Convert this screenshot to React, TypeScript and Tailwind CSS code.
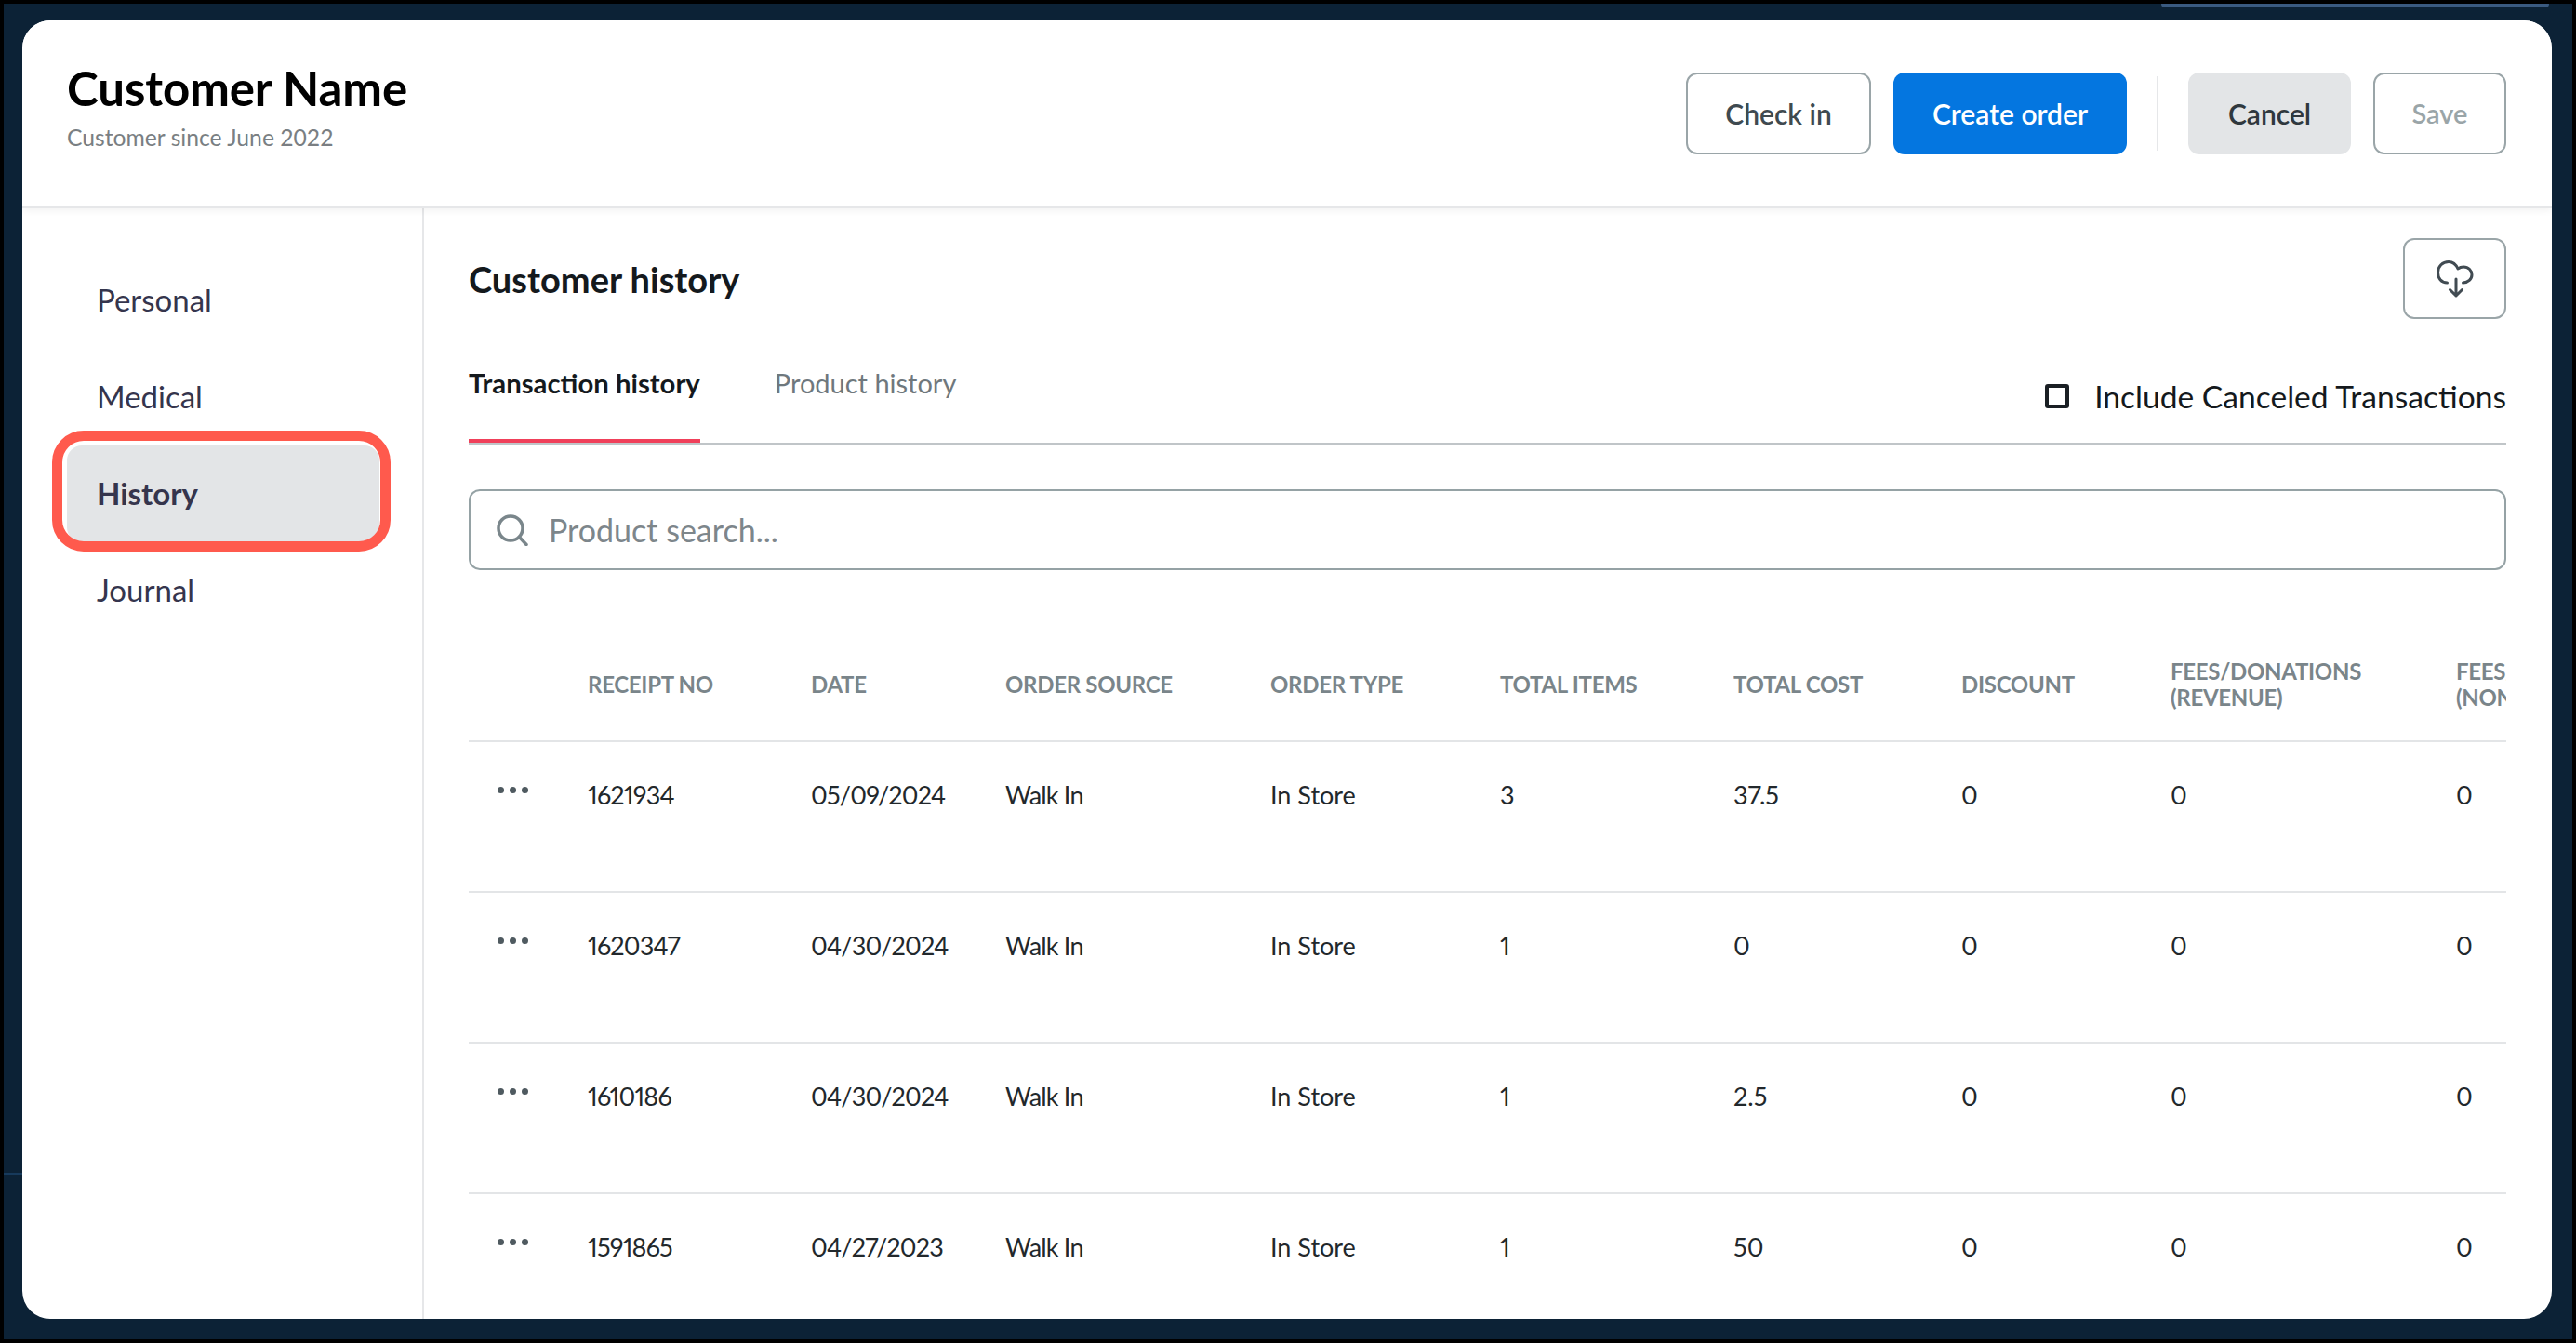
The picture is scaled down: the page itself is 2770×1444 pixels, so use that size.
const columns = 'grid grid-cols-[128px_240px_209px_285px_247px_251px_245px_225px_307px_320px]'

const headers = [
  '',
  'RECEIPT NO',
  'DATE',
  'ORDER SOURCE',
  'ORDER TYPE',
  'TOTAL ITEMS',
  'TOTAL COST',
  'DISCOUNT',
  'FEES/DONATIONS (REVENUE)',
  'FEES/DONATIONS (NON-REVENUE)',
]

const rows = [
  ['1621934', '05/09/2024', 'Walk In', 'In Store', '3', '37.5', '0', '0', '0'],
  ['1620347', '04/30/2024', 'Walk In', 'In Store', '1', '0', '0', '0', '0'],
  ['1610186', '04/30/2024', 'Walk In', 'In Store', '1', '2.5', '0', '0', '0'],
  ['1591865', '04/27/2023', 'Walk In', 'In Store', '1', '50', '0', '0', '0'],
]

const navItems = ['Personal', 'Medical', 'History', 'Journal']

function CloudDownloadIcon() {
  return (
    <svg width="40" height="40" viewBox="0 0 40 40" fill="none" stroke="#414b52" strokeWidth="3" strokeLinecap="round" strokeLinejoin="round">
      <path d="M11.5 24 C5 24 1.5 19 1.5 13 C1.5 6.5 6.5 1.5 13 1.5 C17.5 1.5 21 4.5 23 9 C25 7.5 27 7 29 7 C34.5 7 38 11 38 15.5 C38 20 34 24 28.5 24" />
      <path d="M21 20 V38 M14.5 31.5 L21 38 L27.5 31.5" />
    </svg>
  )
}

function SearchIcon() {
  return (
    <svg width="34" height="34" viewBox="0 0 34 34" fill="none" stroke="#7a868b" strokeWidth="3.5" strokeLinecap="round">
      <circle cx="15" cy="15" r="13" />
      <path d="M24.5 24.5 L32 32.5" />
    </svg>
  )
}

function Dots() {
  return (
    <div className="flex gap-[6px] mt-[9px]">
      <span className="size-[7px] rounded-full bg-[#4f5a60]" />
      <span className="size-[7px] rounded-full bg-[#4f5a60]" />
      <span className="size-[7px] rounded-full bg-[#4f5a60]" />
    </div>
  )
}

export default function App() {
  return (
    <div className="w-[2770px] h-[1444px] bg-black p-1 font-['Lato',sans-serif] overflow-hidden">
      <div className="relative size-full bg-[#0c2236] pt-[18px] pl-5 pr-[22px] pb-[22px]">
        <div className="absolute top-0 left-[2320px] w-[417px] h-1 rounded-b-md bg-[#3a5a80]" />
        <div className="absolute top-[1257px] left-0 w-5 h-[2px] bg-[#173a5c]" />

        <div className="relative size-full bg-white rounded-[30px] overflow-hidden flex flex-col">
          <header className="relative z-10 h-[202px] shrink-0 flex items-center justify-between pl-12 pr-[49px] border-b-2 border-[#e6e7e9] shadow-[0_2px_8px_rgba(0,0,0,0.06)] bg-white">
            <div className="-mt-[14px]">
              <h1 className="text-[51px] leading-[56px] font-bold tracking-[-0.1px] text-black">Customer Name</h1>
              <p className="mt-[9px] text-[24.7px] leading-8 text-[#7a7f83]">Customer since June 2022</p>
            </div>
            <div className="flex items-center">
              <button className="w-[199px] h-[88px] rounded-xl border-2 border-[#9aa5a8] text-[30px] font-semibold text-[#3f4a50]">Check in</button>
              <button className="ml-6 w-[251px] h-[88px] rounded-xl bg-[#0476e0] text-[30px] font-semibold text-white">Create order</button>
              <div className="ml-8 w-[2px] h-20 bg-[#e6e7e9]" />
              <button className="ml-8 w-[175px] h-[88px] rounded-xl bg-[#e3e5e7] text-[30px] font-semibold text-[#2f383e]">Cancel</button>
              <button className="ml-6 w-[143px] h-[88px] rounded-xl border-2 border-[#9aa5a8] text-[29px] font-semibold text-[#9aa5a8]">Save</button>
            </div>
          </header>

          <div className="flex flex-1 min-h-0">
            <nav className="w-[432px] shrink-0 border-r-2 border-[#e6e7e9] pt-[47px] pl-12 pr-[46px]">
              {navItems.map((item) => (
                <div key={item} className={`relative h-[104px] flex items-center px-8 text-[33px] text-[#35354d] rounded-2xl ${item === 'History' ? 'bg-[#e3e5e7] font-bold' : ''}`}>
                  {item}
                  {item === 'History' && (
                    <div className="absolute -top-4 -left-4 -right-3 -bottom-[10px] border-[11px] border-[#ff5a4d] rounded-[34px]" />
                  )}
                </div>
              ))}
            </nav>

            <main className="flex-1 min-w-0 pl-12 pr-[49px]">
              <div className="flex items-center justify-between pt-8">
                <h2 className="text-[38px] leading-[44px] font-bold text-[#14191d]">Customer history</h2>
                <button className="w-[111px] h-[87px] rounded-xl border-2 border-[#9aa5a8] flex items-center justify-center">
                  <CloudDownloadIcon />
                </button>
              </div>

              <div className="h-[135px] flex items-end justify-between border-b-2 border-[#c0c5c8]">
                <div className="flex gap-20">
                  <div className="pb-[42px] border-b-4 border-[#f0405a] text-[29.3px] leading-9 font-bold text-[#14191d]">Transaction history</div>
                  <div className="pb-[42px] border-b-4 border-transparent text-[29px] leading-9 text-[#6f787d]">Product history</div>
                </div>
                <label className="flex items-center gap-[27px] pb-[30px] text-[33.6px] leading-10 text-[#14191d]">
                  <span className="size-[26px] rounded-[3px] border-4 border-[#1a1f24]" />
                  Include Canceled Transactions
                </label>
              </div>

              <div className="mt-12 h-[87px] flex items-center rounded-xl border-2 border-[#95a2a5] pl-7 gap-[22px]">
                <SearchIcon />
                <span className="text-[34px] text-[#7d868b]">Product search...</span>
              </div>

              <div className="mt-[63px] overflow-hidden">
                <div className={`${columns} h-[122px] items-center border-b-2 border-[#e3e5e7]`}>
                  {headers.map((h, i) => (
                    <div key={i} className="pr-10 text-[24px] leading-7 font-bold tracking-[-0.3px] text-[#7a858a]">{h}</div>
                  ))}
                </div>
                {rows.map((row) => (
                  <div key={row[0]} className={`${columns} h-[162px] pt-[39px] border-b-2 border-[#e3e5e7] text-[27px] leading-9 text-[#22282c] proportional-nums`}>
                    <div className="pl-[31px]"><Dots /></div>
                    {row.map((cell, i) => (
                      <div key={i} className={i < 3 ? 'tracking-[-0.8px]' : ''}>{cell}</div>
                    ))}
                  </div>
                ))}
              </div>
            </main>
          </div>
        </div>
      </div>
    </div>
  )
}
